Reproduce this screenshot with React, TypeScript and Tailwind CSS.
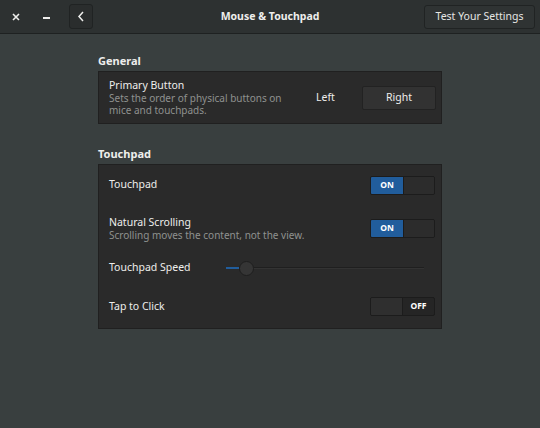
import React from "react"

const font = { fontFamily: '"Noto Sans", "Open Sans", sans-serif' }

const Toggle = ({ on }: { on: boolean }) => {
    return (
        <div className="flex h-[19px] w-[65px] border border-[#1c1c1c] rounded-[2px] overflow-hidden bg-[#252525]">
            {on ? (
                <>
                    <div className="w-[32px] h-full bg-[#215d9c] flex items-center justify-center text-[8.5px] font-bold text-white">ON</div>
                    <div className="flex-1 h-full bg-[#2c2c2c] border-l border-[#1c1c1c]" />
                </>
            ) : (
                <>
                    <div className="w-[32px] h-full bg-[#2f2f2f] border-r border-[#1c1c1c]" />
                    <div className="flex-1 h-full flex items-center justify-center text-[8.5px] font-bold text-white">OFF</div>
                </>
            )}
        </div>
    )
}

const App = () => {
    return (
        <div style={font} className="w-[540px] h-[428px] bg-[#393f3f] flex flex-col text-[#eeeeec] overflow-hidden">
            {/* header bar */}
            <div className="h-[34px] shrink-0 bg-[#2d3131] border-b border-[#1e2121] grid grid-cols-[1fr_auto_1fr] items-center">
                <div className="flex items-center">
                    <div className="w-[32px] flex justify-center">
                        <svg width="8" height="8" viewBox="0 0 8 8">
                            <path d="M1 1L7 7M7 1L1 7" stroke="#eeeeec" strokeWidth="1.6" />
                        </svg>
                    </div>
                    <div className="w-[28px] flex justify-center pt-[2px]">
                        <div className="w-[7px] h-[2px] bg-[#eeeeec]" />
                    </div>
                    <div className="ml-[9px] w-[24px] h-[25px] border border-[#202323] rounded-[3px] bg-[#2a2d2d] flex items-center justify-center">
                        <svg width="8" height="11" viewBox="0 0 8 11">
                            <path d="M6 1L2 5.5L6 10" stroke="#eeeeec" strokeWidth="1.5" fill="none" />
                        </svg>
                    </div>
                </div>
                <div className="text-[10.5px] font-bold text-[#eeeeec]">Mouse &amp; Touchpad</div>
                <div className="flex justify-end pr-[5px]">
                    <div className="h-[24px] w-[111px] border border-[#202323] rounded-[3px] bg-[#2f3333] flex items-center justify-center text-[10.5px] text-[#e6e6e4]">
                        Test Your Settings
                    </div>
                </div>
            </div>

            {/* content */}
            <div className="w-[344px] mx-auto flex flex-col">
                <div className="mt-[18px] h-[17px] text-[11px] font-bold leading-[17px]">General</div>
                <div className="mt-[2px] h-[53px] bg-[#2a2a2a] border border-[#202020] flex items-center pl-[10px] pr-[6px]">
                    <div className="flex-1 flex flex-col -mt-[1px]">
                        <div className="text-[10.5px] leading-[14px]">Primary Button</div>
                        <div className="text-[10px] leading-[12px] text-[#8f918f] w-[180px]">Sets the order of physical buttons on mice and touchpads.</div>
                    </div>
                    <div className="flex h-[24px]">
                        <div className="w-[73px] h-full flex items-center justify-center text-[10.5px] bg-[#2a2a2a]">Left</div>
                        <div className="w-[74px] h-full flex items-center justify-center text-[10.5px] bg-[#323232] border border-[#222] rounded-[2px]">Right</div>
                    </div>
                </div>

                <div className="mt-[21px] h-[17px] text-[11px] font-bold leading-[17px]">Touchpad</div>
                <div className="mt-[2px] bg-[#2a2a2a] border border-[#202020] flex flex-col pl-[10px] pr-[6px]">
                    <div className="h-[40px] flex items-center justify-between">
                        <div className="text-[10.5px]">Touchpad</div>
                        <Toggle on />
                    </div>
                    <div className="h-[46px] flex items-center justify-between">
                        <div className="flex flex-col">
                            <div className="text-[10.5px] leading-[14px]">Natural Scrolling</div>
                            <div className="text-[10px] leading-[13px] text-[#8f918f]">Scrolling moves the content, not the view.</div>
                        </div>
                        <Toggle on />
                    </div>
                    <div className="h-[34px] flex items-center">
                        <div className="text-[10.5px] w-[117px]">Touchpad Speed</div>
                        <div className="flex-1 mr-[11px] flex items-center">
                            <div className="w-[13px] h-[2px] bg-[#215d9c]" />
                            <div className="w-[15px] h-[15px] rounded-full bg-[#353535] border border-[#1e1e1e]" />
                            <div className="flex-1 h-[2px] bg-[#1f1f1f] border-b border-[#333]" />
                        </div>
                    </div>
                    <div className="h-[43px] flex items-center justify-between">
                        <div className="text-[10.5px]">Tap to Click</div>
                        <Toggle on={false} />
                    </div>
                </div>
            </div>
        </div>
    )
}

export default App
